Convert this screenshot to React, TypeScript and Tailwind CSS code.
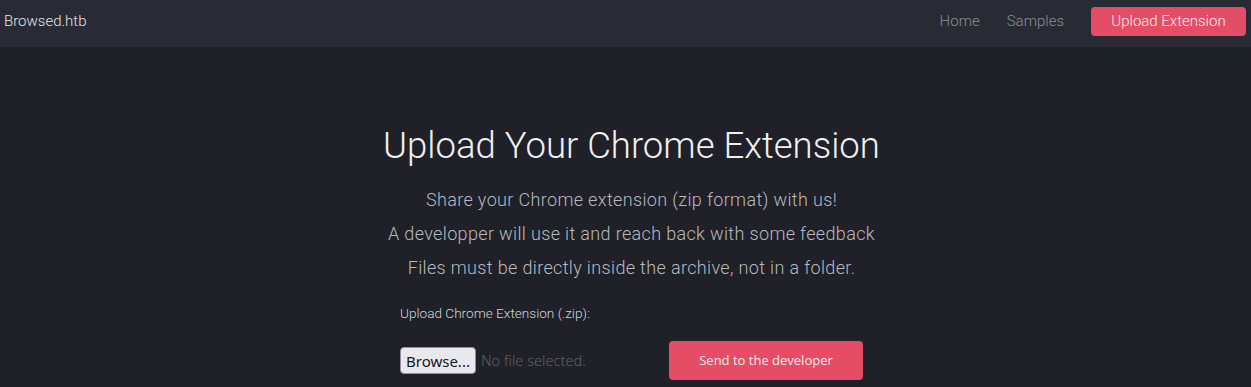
export default function App() {
  return (
    <div className="min-h-screen bg-[#1f2028] text-white font-['Roboto',sans-serif] font-light">
      <nav className="h-[47px] bg-[#282a34] flex items-center justify-between pl-[4px] pr-[5px] pb-[4px]">
        <a className="text-[15px] text-[#e4e4e8] font-light">Browsed.htb</a>
        <div className="flex items-center">
          <a className="text-[15px] text-[#8e8f97] mr-[27px]">Home</a>
          <a className="text-[15px] text-[#8e8f97] mr-[27px]">Samples</a>
          <a className="h-[29px] w-[155px] flex items-center justify-center rounded-[4px] bg-[#e44d65] text-[15px] text-[#f6ecef] font-light">
            Upload Extension
          </a>
        </div>
      </nav>

      <main className="flex flex-col items-center pl-[12px] pt-[76px]">
        <h1 className="text-[36.5px] leading-[46px] text-[#f0f0f2] font-light">Upload Your Chrome Extension</h1>
        <div className="mt-[14px] flex flex-col items-center text-[18px] leading-[34px] tracking-[0.35px] text-[#b9babf]">
          <p>Share your Chrome extension (zip format) with us!</p>
          <p>A developper will use it and reach back with some feedback</p>
          <p>Files must be directly inside the archive, not in a folder.</p>
        </div>

        <form className="w-[463px] mt-[18px] flex flex-col">
          <label className="text-[13.6px] text-[#d6d6da] font-light">Upload Chrome Extension (.zip):</label>
          <div className="mt-[18px] flex items-center justify-between">
            <div className="flex items-center">
              <span className="h-[27px] px-[5px] flex items-center rounded-[4px] border border-[#8f8f9d] bg-[#e9e9ed] text-[#15141a] text-[15px] font-['Noto_Sans',sans-serif] font-normal">
                Browse...
              </span>
              <span className="ml-[5px] text-[14.6px] text-[#5f6067] font-['Noto_Sans',sans-serif] font-light">No file selected.</span>
            </div>
            <button
              type="button"
              className="h-[39px] w-[194px] rounded-[4px] bg-[#e44d65] text-[13px] text-[#f7e9ec] font-['Open_Sans',sans-serif] font-normal"
            >
              Send to the developer
            </button>
          </div>
        </form>
      </main>
    </div>
  );
}
